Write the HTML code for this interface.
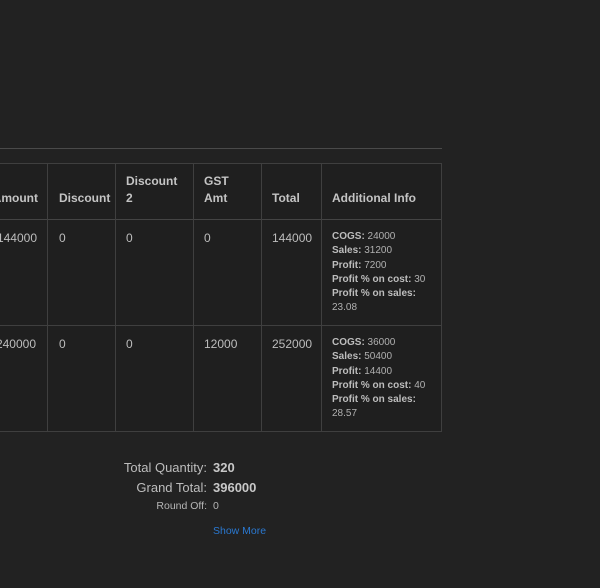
<!DOCTYPE html>
<html><head><meta charset="utf-8"><style>
html,body{margin:0;padding:0;background:#222222;width:600px;height:588px;overflow:hidden;font-family:"Liberation Sans",Roboto,sans-serif;color:#bdbdbd}
.a{position:absolute;white-space:nowrap}
.h{font-weight:bold;font-size:12px;color:#c4c4c4;line-height:17px}
.c{font-size:12px;color:#bdbdbd}
.vl{position:absolute;width:1px;background:#3f3f3f;top:163px;height:268px}
.hl{position:absolute;height:1px;background:#3f3f3f;left:0;width:442px}
.info{position:absolute;left:332px;font-size:10px;line-height:14.3px;color:#b0b0b0}
.info b{color:#bdbdbd}
</style></head><body>
<div class="a" style="left:0;top:148px;width:442px;height:1px;background:#4a4a4a"></div>
<div class="a" style="left:0;top:163px;width:442px;height:268px;background:#1f1f1f"></div>
<div class="hl" style="top:163px"></div>
<div class="hl" style="top:219px;background:#444"></div>
<div class="hl" style="top:325px"></div>
<div class="hl" style="top:431px"></div>
<div class="vl" style="left:47px"></div>
<div class="vl" style="left:115px"></div>
<div class="vl" style="left:193px"></div>
<div class="vl" style="left:261px"></div>
<div class="vl" style="left:321px"></div>
<div class="vl" style="left:441px"></div>

<div class="a h" style="right:562px;top:190px">Amount</div>
<div class="a h" style="left:59px;top:190px">Discount</div>
<div class="a h" style="left:126px;top:173px">Discount<br>2</div>
<div class="a h" style="left:204px;top:173px">GST<br>Amt</div>
<div class="a h" style="left:272px;top:190px">Total</div>
<div class="a h" style="left:332px;top:190px">Additional Info</div>

<div class="a c" style="right:563px;top:231px">144000</div>
<div class="a c" style="left:59px;top:231px">0</div>
<div class="a c" style="left:126px;top:231px">0</div>
<div class="a c" style="left:204px;top:231px">0</div>
<div class="a c" style="left:272px;top:231px">144000</div>
<div class="info" style="top:230px"><b>COGS:</b> 24000<br><b>Sales:</b> 31200<br><b>Profit:</b> 7200<br><b>Profit % on cost:</b> 30<br><b>Profit % on sales:</b><br>23.08</div>

<div class="a c" style="right:564px;top:337px">240000</div>
<div class="a c" style="left:59px;top:337px">0</div>
<div class="a c" style="left:126px;top:337px">0</div>
<div class="a c" style="left:204px;top:337px">12000</div>
<div class="a c" style="left:272px;top:337px">252000</div>
<div class="info" style="top:336px"><b>COGS:</b> 36000<br><b>Sales:</b> 50400<br><b>Profit:</b> 14400<br><b>Profit % on cost:</b> 40<br><b>Profit % on sales:</b><br>28.57</div>

<div class="a" style="right:393px;top:460px;font-size:13px;color:#bdbdbd">Total Quantity:</div>
<div class="a" style="left:213px;top:460px;font-size:13px;font-weight:bold;color:#c8c8c8">320</div>
<div class="a" style="right:393px;top:480px;font-size:13px;color:#bdbdbd">Grand Total:</div>
<div class="a" style="left:213px;top:480px;font-size:13px;font-weight:bold;color:#c8c8c8">396000</div>
<div class="a" style="right:393px;top:500px;font-size:10.5px;color:#b5b5b5">Round Off:</div>
<div class="a" style="left:213px;top:500px;font-size:10.5px;color:#b5b5b5">0</div>
<div class="a" style="left:213px;top:525px;font-size:10.5px;color:#2a78d0">Show More</div>
</body></html>
